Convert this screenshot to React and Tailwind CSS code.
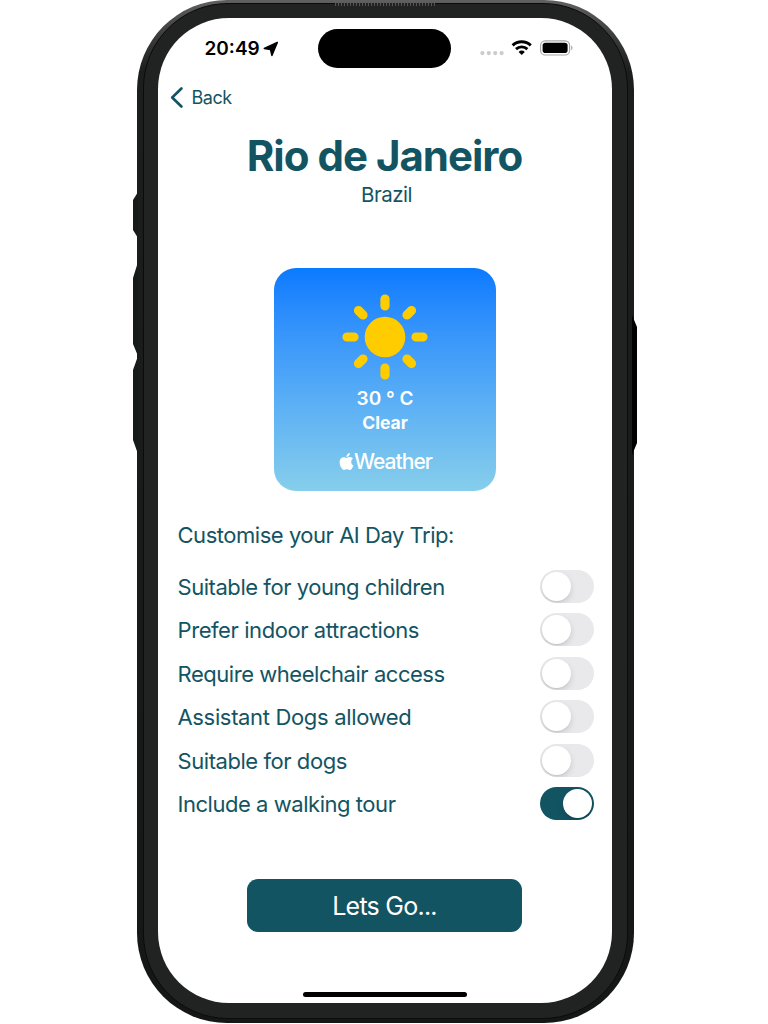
import { SiApple } from "react-icons/si";

const OPTIONS = [
  { label: "Suitable for young children", tracking: "tracking-[-0.45px]", on: false },
  { label: "Prefer indoor attractions", tracking: "tracking-[-0.42px]", on: false },
  { label: "Require wheelchair access", tracking: "tracking-[-0.46px]", on: false },
  { label: "Assistant Dogs allowed", tracking: "tracking-[-0.34px]", on: false },
  { label: "Suitable for dogs", tracking: "tracking-[-0.44px]", on: false },
  { label: "Include a walking tour", tracking: "tracking-[-0.46px]", on: true },
];

function Toggle({ on }) {
  return (
    <div
      role="switch"
      aria-checked={on}
      className={
        on
          ? "flex h-[33px] w-[54px] items-center justify-end overflow-hidden rounded-full bg-[#135463] px-[2px]"
          : "flex h-[33px] w-[54px] items-center overflow-hidden rounded-full bg-[#e9e9eb] px-[2px]"
      }
    >
      <div className="size-[29px] rounded-full bg-white shadow-[0_3px_6px_rgba(0,0,0,0.13),0_1px_1px_rgba(0,0,0,0.05)]" />
    </div>
  );
}

function StatusBar() {
  return (
    <div className="flex h-[50px] items-start pt-[11px]">
      <div className="flex h-[39px] w-[160px] items-center pl-[47px]">
        <span className="mt-[2px] text-[19px] font-semibold text-black">20:49</span>
        <svg className="ml-[3px]" width="16" height="16" viewBox="0 0 16 16">
          <path d="M14.3 1.4 1.3 7.5 7.5 8.6 8.9 14.4Z" stroke="#000" strokeWidth="1.5" strokeLinejoin="round" />
        </svg>
      </div>
      <div className="h-[39px] w-[133.5px] rounded-full bg-black" />
      <div className="flex h-[39px] flex-1 items-center pl-[29px]">
        <svg width="93" height="20" viewBox="0 0 93 20">
          <g fill="#cbcbcb">
            <circle cx="2.4" cy="14.1" r="2.1" />
            <circle cx="8.8" cy="14.1" r="2.1" />
            <circle cx="15.2" cy="14.1" r="2.1" />
            <circle cx="21.6" cy="14.1" r="2.1" />
          </g>
          <g fill="none" stroke="#000" strokeWidth="2.9">
            <path d="M32.6 6.4a13.2 13.2 0 0 1 18.2 0" />
            <path d="M36 10.1a8.3 8.3 0 0 1 11.4 0" />
          </g>
          <path d="M41.7 16 38.6 12.9a4.4 4.4 0 0 1 6.2 0Z" />
          <rect x="60.6" y="1.8" width="29" height="14.2" rx="4.6" fill="none" stroke="#a6a6a6" strokeWidth="1.2" />
          <rect x="62.6" y="3.8" width="25" height="10.2" rx="2.8" />
          <path d="M91.2 6.6c1.7.6 1.7 4 0 4.6Z" fill="#a6a6a6" />
        </svg>
      </div>
    </div>
  );
}

function WeatherCard() {
  return (
    <div className="flex h-[222.5px] w-[222.5px] flex-col items-center rounded-[22px] bg-linear-to-b from-[#087aff] to-[#86ceeb] text-white">
      <svg className="mt-[26px] shrink-0" width="86" height="86" viewBox="-43 -43 86 86">
        <circle r="20.3" fill="#ffcc00" />
        <g stroke="#ffcc00" strokeWidth="9.2" strokeLinecap="round">
          <path d="M0-38V-31M0 38V31M-38 0H-31M38 0H31M-26.5-26.5-22-22M26.5-26.5 22-22M-26.5 26.5-22 22M26.5 26.5 22 22" />
        </g>
      </svg>
      <div className="mt-[7px] text-[19px] leading-[24px] font-semibold">30 ° C</div>
      <div className="text-[17.5px] leading-[24px] font-bold">Clear</div>
      <div className="mt-[14px] flex items-center leading-[26px]">
        <SiApple preserveAspectRatio="none" className="mb-[2px] h-[17px] w-[17px]" />
        <span className="-ml-[1px] text-[21px] font-medium tracking-[-0.95px]">Weather</span>
      </div>
    </div>
  );
}

function SideButton({ className }) {
  return <div className={"absolute w-[5px] " + className} />;
}

export default function App() {
  return (
    <div className="flex h-[1024px] w-[768px] justify-center overflow-hidden bg-white font-['Inter',sans-serif] whitespace-nowrap text-[#135463]">
      <div className="relative ml-[2.5px] h-[1023px] w-[496.5px] rounded-[90px] bg-linear-to-b from-[#606060] from-0% via-[#1c1d1d] via-7% to-[#151616] pt-[3px] pr-[6px] pb-[4px] pl-[5.5px]">
        <SideButton className="top-[192px] -left-[4px] h-[46px] bg-[#171a1a] [clip-path:polygon(0_8px,100%_0,100%_100%,0_38px)]" />
        <SideButton className="top-[262px] -left-[4px] h-[94px] bg-[#171a1a] [clip-path:polygon(0_16px,100%_0,100%_100%,0_82px)]" />
        <SideButton className="top-[356px] -left-[4px] h-[98px] bg-[#171a1a] [clip-path:polygon(0_14px,100%_0,100%_100%,0_84px)]" />
        <SideButton className="top-[315px] -right-[3.5px] h-[140px] bg-black [clip-path:polygon(0_0,100%_12px,100%_128px,0_100%)]" />
        <div className="absolute top-[3px] left-1/2 h-[2.5px] w-[100px] -translate-x-1/2 bg-[repeating-linear-gradient(90deg,#555_0_1px,#222_1px_3px)]" />
        <div className="h-full rounded-[85px] border border-[#0b0b0b] bg-[#212222] pt-[14px] pr-[15px] pb-[15px] pl-[14px]">
          <div className="relative flex h-full flex-col overflow-hidden rounded-[71px] bg-white">
            <StatusBar />
            <div className="mt-[14px] flex h-[30px] items-center pt-[1px] pl-[12px]">
              <svg width="14" height="21" viewBox="0 0 14 21" fill="none">
                <path d="M11.4 1.5 2.2 10.5 11.4 19.5" stroke="#135463" strokeWidth="2.6" strokeLinecap="round" strokeLinejoin="round" />
              </svg>
              <span className="ml-[8px] text-[18px] tracking-[-0.5px]">Back</span>
            </div>
            <h1 className="mt-[19px] text-center text-[42px] leading-[50px] font-bold tracking-[-1px]">Rio de Janeiro</h1>
            <div className="pt-[1px] pl-[4px] text-center text-[20.5px] leading-[26px] tracking-[-0.5px]">Brazil</div>
            <div className="mt-[60px] flex justify-center pl-px">
              <WeatherCard />
            </div>
            <h2 className="mt-[29px] pl-[20px] text-[22px] leading-[30px] tracking-[-0.47px]">Customise your AI Day Trip:</h2>
            <div className="mt-[15px] flex flex-col pr-[18px] pl-[20px]">
              {OPTIONS.map((o) => (
                <div key={o.label} className="flex h-[43.5px] items-center justify-between">
                  <span className={"pt-px text-[22px] leading-[30px] " + o.tracking}>{o.label}</span>
                  <Toggle on={o.on} />
                </div>
              ))}
            </div>
            <div className="mt-[53px] flex justify-center">
              <button className="h-[53px] w-[275.5px] rounded-[11px] bg-[#135463] pt-[3px] text-[25px] tracking-[-0.75px] text-white">Lets Go...</button>
            </div>
            <div className="mt-auto mb-[6px] flex justify-center">
              <div className="h-[5.5px] w-[164px] rounded-full bg-black" />
            </div>
          </div>
        </div>
      </div>
    </div>
  );
}
